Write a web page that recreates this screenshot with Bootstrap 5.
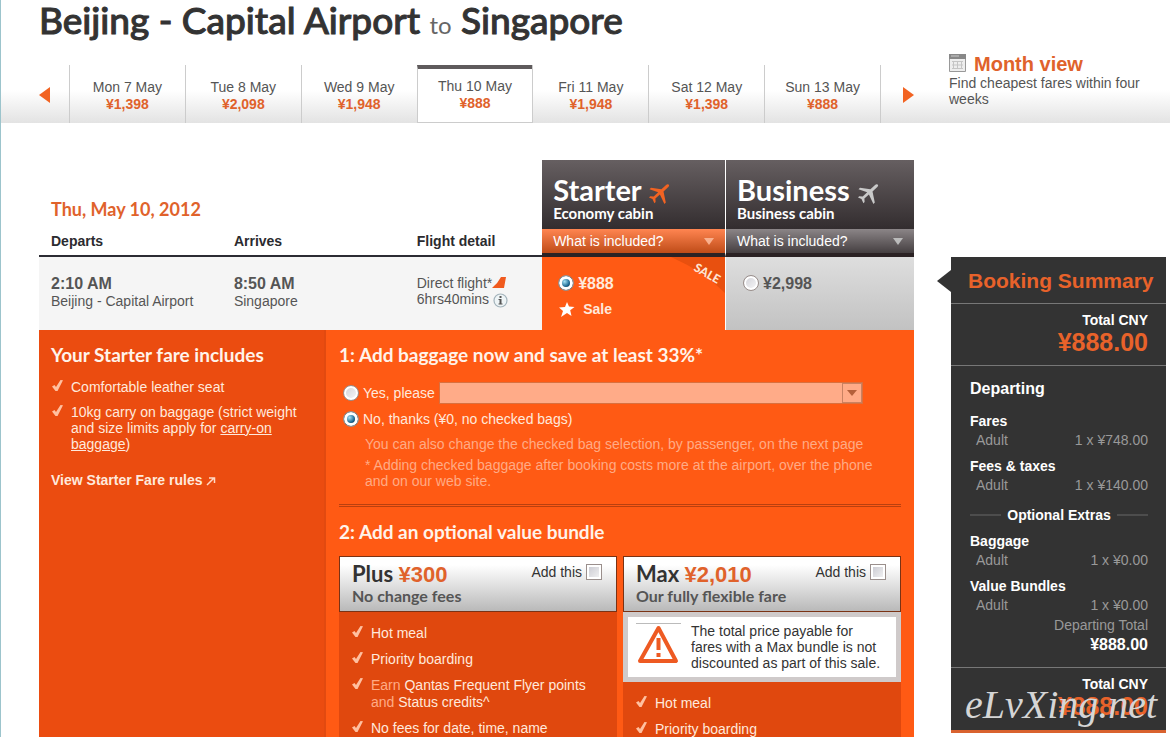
<!DOCTYPE html>
<html lang="en">
<head>
<meta charset="utf-8">
<meta name="viewport" content="width=device-width, initial-scale=1">
<title>Beijing - Capital Airport to Singapore</title>
<link href="https://cdn.jsdelivr.net/npm/bootstrap@5.3.0/dist/css/bootstrap.min.css" rel="stylesheet">
<style>
:root{--jet:#ff5a14;--jet-text:#e0622b;--ink:#333;--soft:#ffe9dc}
body{font-family:"Liberation Sans",Arial,sans-serif;font-size:14px;line-height:16px;color:#555;background:#fff}
.page{border-left:1px solid #9cc4cc;height:100vh;overflow:hidden}
.geo{font-family:Lato,"Liberation Sans",sans-serif;font-weight:700;margin:0}
.route{font-size:37px;line-height:40px;font-weight:500;color:var(--ink);padding-left:38px;height:50px;white-space:nowrap;-webkit-text-stroke:1px var(--ink)}
.route small{font-size:24px;font-weight:400;color:#666;-webkit-text-stroke:0}
.orange{color:var(--jet-text)}
.frame{padding-left:38px;padding-right:4px;gap:37px}
.side{width:215px;flex:none}
.datebar{background:linear-gradient(#fff 55%,#e3e3e3);height:73px}
.days{height:58px}
.day{flex:1 1 0;border-left:1px solid #ccc;color:#555;text-decoration:none;text-align:center;line-height:17px;padding-top:14px}
.day strong,.cal strong{color:var(--jet-text)}
.day.now{background:#fff;border-top:4px solid #5f5b5c;padding-top:9px;border-bottom:1px solid #ccc}
.step{border:0;background:none;padding:0;width:30px;text-align:left}
.step.next{border-left:1px solid #ccc;width:34px;text-align:right}
.cal{color:#555;text-decoration:none;margin:0 -4px 0 -2px}
.cal strong{font-size:20px;line-height:21px}

.fares{margin-top:37px}
.flights{width:100%;table-layout:fixed;color:#555;border-collapse:separate;border-spacing:0}
.flights th,.flights td{padding:0 0 0 12px;vertical-align:top}
.flights .hrow th{height:69px}
.flights .lrow th{height:28px;color:#2b2b2f;border-bottom:2px solid #2b2b33;line-height:24px}
.flights td{height:73px;background:#f5f5f5;padding-top:18px}
.day-title{font-size:18px;line-height:24px}
.flights .cabin{background:linear-gradient(#665f61,#332d2f);color:#fff;padding:15px 0 0 11px}
.cabin-name{font-size:29px;line-height:30px}
.cabin-sub{font-size:15px;line-height:14px}
.flights .vline{border-left:1px solid #fff}
.inc{border:0;width:100%;height:24px;display:flex;justify-content:space-between;padding:0 11px;line-height:24px;color:#fff;align-items:center}
.flights .lrow .incell{padding:0;border-bottom:4px solid #2b2224;height:28px}
.inc-o{background:linear-gradient(#ff8551,#bf4c18)}
.inc-g{background:linear-gradient(#8b8587,#453f41)}
.flights .pick{background:var(--jet);color:var(--soft);position:relative;padding-left:16px}
.flights .pick2{background:linear-gradient(#dedede,#c2c2c2);padding-left:17px}
.ribbon{position:absolute;top:0;right:0}
.big{font-size:16px;line-height:18px;font-weight:700}

input[type=radio],input[type=checkbox]{appearance:none;flex:none;width:16px;height:16px;margin:0;border:1px solid #9a8f8c}
input[type=checkbox]{background:linear-gradient(135deg,#c6c6ce,#f6f6f6);box-shadow:inset 0 0 0 2px #fff}
input[type=radio]{border-radius:50%;background:linear-gradient(135deg,#cfcfd6,#fafafa);box-shadow:inset 0 0 0 2px #fff}
input[type=radio]:checked{background:radial-gradient(circle at 40% 40%,#a5e2f5,#1d6a94 40%,#0b2c44 60%);box-shadow:inset 0 0 0 3px #fff}

.panel{background:var(--jet);color:var(--soft)}
.includes{width:287px;flex:none;background:#eb4c10;border-right:2px solid #e24a10;padding:13px 12px}
.h-sm{font-size:19px;line-height:24px;color:#fff3ea}
.includes a{color:var(--soft)}
.ticks{list-style:none;margin:0;padding:0;display:grid;gap:9px}
.ticks li{display:flex;gap:7px}
.ticks svg{flex:none;width:13px;height:13px}
.options{padding:13px 13px 0;min-width:0}
.choice{display:flex;align-items:center;gap:4px;padding-left:4px;margin-top:15px}
.choice + .choice{margin-top:7px}
.bags{height:22px;border:1px solid #d9703f;background:#ffab88;border-radius:0;appearance:none;width:100%;display:block}
.bagwrap{position:relative;flex:1;margin-right:38px}
.bagbtn{position:absolute;right:1px;top:1px;width:20px;height:20px;border:1px solid #c98263;pointer-events:none}
.notes{color:#ffab85;padding:0 16px 0 26px;margin-top:9px}
.notes p{margin:0 0 5px}
.rule{border-top:1px solid #b9400f;border-bottom:1px solid #b9400f;height:3px;margin:15px 0 13px}
.bundles{gap:6px;margin-top:12px}
.bundle{flex:1 1 0;background:#e0480e;min-width:0;padding-bottom:60px}
.bundle-head{border:1px solid #7a3214;background:linear-gradient(#fff 15%,#b9b9b9);height:56px;padding:4px 14px 0 12px;color:#333}
.bundle-head label{display:flex;gap:4px;padding-top:3px;align-self:flex-start}
.bundle-name{font-size:22px;line-height:26px}
.bundle-name .orange{font-family:"Liberation Sans",Arial,sans-serif}
.bundle-sub{font-size:16px;line-height:16px;color:#555}
.bundle .ticks{padding:13px 12px 0;line-height:17px}
.dim{color:#ffab85}
.warn{background:#fff;border:5px solid #cfcaca;color:#333;padding:6px 12px 6px 8px;gap:10px}

.summary{margin-top:134px;background:#333;color:#fff;border-bottom:3px solid #d9622f;position:relative;height:476px}
.summary::before{content:"";position:absolute;left:-14px;top:13px;border:solid transparent;border-width:11px 14px 11px 0;border-right-color:#333}
.summary h2{font-size:21px;line-height:26px;font-weight:700;margin:0;padding:11px 0 9px 17px;color:#e8622a;white-space:nowrap}
.total{border-top:1px solid #777;padding:8px 18px 8px 0;text-align:right;font-weight:700}
.total b{display:block;font-size:25px;line-height:29px;color:#e8622a}
.lines{border-top:1px solid #777;padding:14px 18px 0 19px}
.lines h3{font-size:16px;line-height:18px;font-weight:700;margin:0 0 14px}
.lines h4{font-size:14px;line-height:18px;font-weight:700;margin:0}
.amt{display:flex;justify-content:space-between;color:#999;padding-left:6px;line-height:20px;margin-bottom:7px}
.extras{display:flex;align-items:center;gap:6px;margin:11px 0 8px;line-height:18px;font-weight:700}
.extras::before,.extras::after{content:"";flex:1;border-top:2px solid #4d4d4d}
.sum{font-size:16px;line-height:20px;font-weight:700;text-align:right;margin-bottom:12px}
.stamp{position:absolute;left:14px;bottom:3px;font:italic 40px/44px "Liberation Serif",serif;color:#d5d5d5;white-space:nowrap}
</style>
</head>
<body>
<svg width="0" height="0" class="position-absolute" aria-hidden="true">
<symbol id="tick" viewBox="0 0 13 13"><path d="M1 7.500 3.500 6l1.500 2L9.500 1l2.500.2L6.500 12H4.500z" fill="#ffc0a0"/></symbol>
<symbol id="plane" viewBox="0 0 22 24"><path d="M20.500 2.500c1 .6.7 1.600-.2 2.500L15.500 9.500l2.300 11-1.400 1.500-4.500-9.500-4.500 4 .2 3.500-1.200 1.200-1.900-4.200L1 15.500l1.200-1.200 3.500.1 4.500-4.200L1.500 7.200 3 5.800l10.400 1.400 4.400-4c1.100-1 1.900-1.200 2.700-.7z"/></symbol>
</svg>
<div class="page">
<h1 class="geo route">Beijing - Capital Airport <small class="p-0">to</small> Singapore</h1>
<div class="datebar frame d-flex">
  <nav class="days d-flex flex-fill align-self-end" aria-label="Days">
    <button class="step" aria-label="Earlier"><svg width="11" height="16" viewBox="0 0 11 16"><path d="M11 0v16L0 8z" fill="#f26322"/></svg></button>
    <a href="#" class="day">Mon 7 May<br><strong>¥1,398</strong></a>
    <a href="#" class="day">Tue 8 May<br><strong>¥2,098</strong></a>
    <a href="#" class="day">Wed 9 May<br><strong>¥1,948</strong></a>
    <a href="#" class="day now">Thu 10 May<br><strong>¥888</strong></a>
    <a href="#" class="day">Fri 11 May<br><strong>¥1,948</strong></a>
    <a href="#" class="day">Sat 12 May<br><strong>¥1,398</strong></a>
    <a href="#" class="day">Sun 13 May<br><strong>¥888</strong></a>
    <button class="step next" aria-label="Later"><svg width="11" height="16" viewBox="0 0 11 16"><path d="M0 0v16l11-8z" fill="#f26322"/></svg></button>
  </nav>
  <div class="side"><a href="#" class="cal d-block">
    <span class="d-flex gap-2 pt-1"><svg width="17" height="18" viewBox="0 0 17 18"><path d="M.5.5h16v17H.5z" fill="#eee" stroke="#999"/><path d="M0 0h17v5H0z" fill="#888"/><path d="M2 2h8" stroke="#ccc"/><path d="M3 7.500h11M3 11h11M3 14.500h11M4.500 7v8M8.500 7v8M12.500 7v8" stroke="#c5c5c5"/></svg><strong>Month view</strong></span>
    Find cheapest fares within four weeks</a></div>
</div>
<div class="frame d-flex align-items-start">
  <main class="fares flex-fill">
    <table class="flights">
      <colgroup><col style="width:20.900%"><col style="width:20.900%"><col style="width:15.700%"><col style="width:20.900%"><col style="width:21.600%"></colgroup>
      <thead>
      <tr class="hrow">
        <th colspan="3" class="align-bottom pb-2"><h2 class="geo day-title orange">Thu, May 10, 2012</h2></th>
        <th class="cabin"><div class="geo cabin-name">Starter <svg width="22" height="24" fill="#f26322"><use href="#plane"/></svg></div><div class="geo cabin-sub">Economy cabin</div></th>
        <th class="cabin vline"><div class="geo cabin-name">Business <svg width="22" height="24" fill="#c9c9c9"><use href="#plane"/></svg></div><div class="geo cabin-sub">Business cabin</div></th>
      </tr>
      <tr class="lrow">
        <th>Departs</th><th>Arrives</th><th>Flight detail</th>
        <th class="incell"><button class="inc inc-o">What is included? <svg width="10" height="7"><path d="M0 0h10L5 7z" fill="#f9b08e"/></svg></button></th>
        <th class="incell vline"><button class="inc inc-g">What is included? <svg width="10" height="7"><path d="M0 0h10L5 7z" fill="#bbb"/></svg></button></th>
      </tr>
      </thead>
      <tbody><tr>
        <td><div class="big">2:10 AM</div>Beijing - Capital Airport</td>
        <td><div class="big">8:50 AM</div>Singapore</td>
        <td class="text-nowrap"><div>Direct flight*<svg width="14" height="11" class="align-baseline"><path d="M0 11Q6 6 9 0h5l-2 11z" fill="#f05a1e"/></svg></div>6hrs40mins <svg width="15" height="15" viewBox="0 0 15 15"><circle cx="7.500" cy="7.500" r="6.500" fill="#eef4f6" stroke="#a3b3bb" stroke-width="1.200"/><path d="M6.500 3h2v2h-2zM5.500 6h3v4.500h1v1h-4v-1h1V7h-1z" fill="#555"/></svg></td>
        <td class="pick"><label class="big d-flex gap-1"><input type="radio" name="fare" checked aria-label="Starter">¥888</label>
          <div class="fw-bold d-flex align-items-center gap-2 mt-1 pt-1"><svg width="17" height="15" viewBox="0 0 17 15"><path d="M9 0l2 4.600 5.500.4-4.300 3.300L13.500 14 9 11l-6 4 2-6L1 5.500l6-.5z" fill="#fff"/></svg>Sale</div>
          <svg class="ribbon" width="54" height="36" viewBox="0 0 54 36"><path d="M0 0h54v36Q32 14 0 0z" fill="#e8500f"/><text x="22" y="13" transform="rotate(30 22 13)" font-family="Lato" font-weight="900" font-size="12" fill="#ffe3d2">SALE</text></svg></td>
        <td class="pick2 vline"><label class="big d-flex gap-1"><input type="radio" name="fare" aria-label="Business">¥2,998</label></td>
      </tr></tbody>
    </table>
    <div class="panel d-flex">
      <section class="includes">
        <h2 class="geo h-sm">Your Starter fare includes</h2>
        <ul class="ticks mt-2 pt-1">
          <li><svg><use href="#tick"/></svg><span>Comfortable leather seat</span></li>
          <li><svg><use href="#tick"/></svg><span>10kg carry on baggage (strict weight and size limits apply for <a href="#">carry-on baggage</a>)</span></li>
        </ul>
        <a href="#" class="fw-bold text-decoration-none d-block mt-3 pt-1">View Starter Fare rules <svg width="10" height="10"><path d="M1 9l7-7M3 2h5.500v5" fill="none" stroke="#ffd9c5" stroke-width="1.500"/></svg></a>
      </section>
      <section class="options flex-fill">
        <h2 class="geo h-sm">1: Add baggage now and save at least 33%*</h2>
        <div class="choice">
          <input type="radio" name="bag" id="by"><label for="by">Yes, please</label>
          <div class="bagwrap"><select class="bags" aria-label="Baggage"><option></option></select><span class="bagbtn d-flex align-items-center justify-content-center"><svg width="10" height="6"><path d="M0 0h10L5 6z" fill="#b5603b"/></svg></span></div>
        </div>
        <div class="choice"><input type="radio" name="bag" id="bn" checked><label for="bn">No, thanks (¥0, no checked bags)</label></div>
        <div class="notes"><p>You can also change the checked bag selection, by passenger, on the next page</p><p>* Adding checked baggage after booking costs more at the airport, over the phone and on our web site.</p></div>
        <div class="rule"></div>
        <h2 class="geo h-sm">2: Add an optional value bundle</h2>
        <div class="bundles d-flex">
          <article class="bundle">
            <div class="bundle-head d-flex justify-content-between"><div><div class="geo bundle-name">Plus <span class="orange">¥300</span></div><div class="geo bundle-sub">No change fees</div></div>
              <label>Add this<input type="checkbox"></label></div>
            <ul class="ticks">
              <li><svg><use href="#tick"/></svg><span>Hot meal</span></li>
              <li><svg><use href="#tick"/></svg><span>Priority boarding</span></li>
              <li><svg><use href="#tick"/></svg><span><span class="dim">Earn</span> Qantas Frequent Flyer points <span class="dim">and</span> Status credits^</span></li>
              <li><svg><use href="#tick"/></svg><span>No fees for date, time, name</span></li>
            </ul>
          </article>
          <article class="bundle">
            <div class="bundle-head d-flex justify-content-between"><div><div class="geo bundle-name">Max <span class="orange">¥2,010</span></div><div class="geo bundle-sub">Our fully flexible fare</div></div>
              <label>Add this<input type="checkbox"></label></div>
            <div class="warn d-flex"><svg class="flex-shrink-0" width="45" height="44" viewBox="0 0 45 44"><path d="M0 .5h45" stroke="#bbb"/><path d="M22.500 5 40 38H4z" fill="none" stroke="#ee5a22" stroke-width="4" stroke-linejoin="round"/><path d="M22.500 15v12M22.500 30v4" stroke="#ee5a22" stroke-width="4"/></svg><span>The total price payable for fares with a Max bundle is not discounted as part of this sale.</span></div>
            <ul class="ticks">
              <li><svg><use href="#tick"/></svg><span>Hot meal</span></li>
              <li><svg><use href="#tick"/></svg><span>Priority boarding</span></li>
            </ul>
          </article>
        </div>
      </section>
    </div>
  </main>
  <aside class="side summary">
    <h2>Booking Summary</h2>
    <div class="total">Total CNY<b>¥888.00</b></div>
    <div class="lines">
      <h3>Departing</h3>
      <h4>Fares</h4><div class="amt"><span>Adult</span><span>1 x ¥748.00</span></div>
      <h4>Fees &amp; taxes</h4><div class="amt"><span>Adult</span><span>1 x ¥140.00</span></div>
      <div class="extras">Optional Extras</div>
      <h4>Baggage</h4><div class="amt"><span>Adult</span><span>1 x ¥0.00</span></div>
      <h4>Value Bundles</h4><div class="amt mb-0"><span>Adult</span><span>1 x ¥0.00</span></div>
      <div class="amt mb-0 justify-content-end">Departing Total</div>
      <div class="sum">¥888.00</div>
    </div>
    <div class="total">Total CNY<b>¥888.00</b></div>
    <div class="stamp">eLvXing.net</div>
  </aside>
</div>
</div>
<script src="https://cdn.jsdelivr.net/npm/bootstrap@5.3.0/dist/js/bootstrap.bundle.min.js"></script>
</body>
</html>
